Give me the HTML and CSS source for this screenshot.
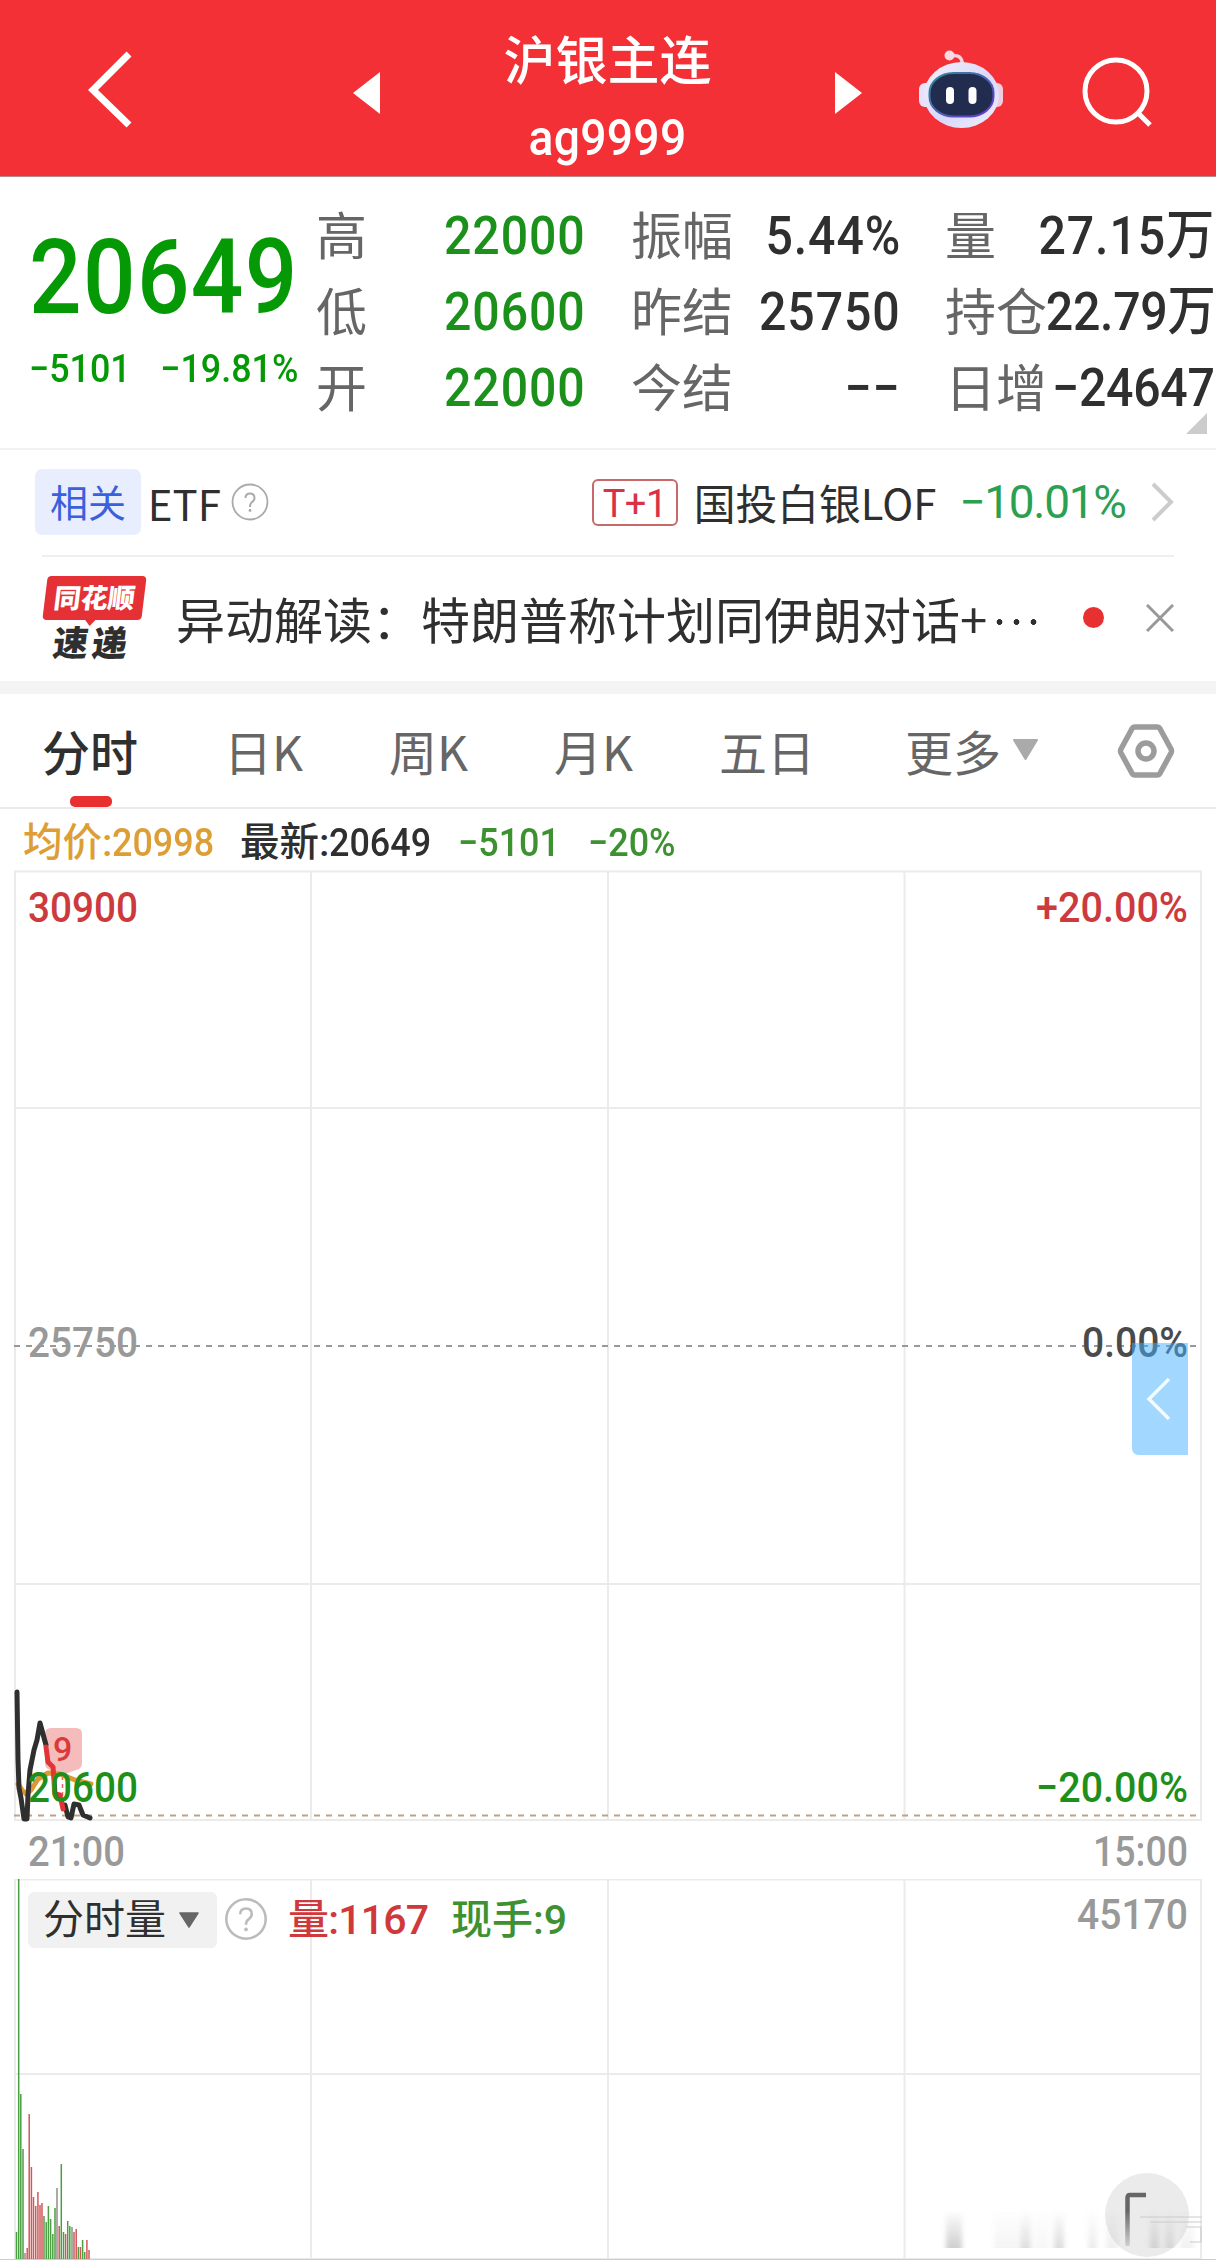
FILE: index.html
```
<!DOCTYPE html>
<html lang="zh-CN">
<head>
    <meta charset="UTF-8">
    <title>沪银主连 ag9999</title>
    <link rel="stylesheet" href="styles.css">
</head>
<body>
    <div class="header">
        <svg class="back" width="50" height="80" viewBox="0 0 50 80"><path d="M45 6 L9 42 L45 77" fill="none" stroke="#fff" stroke-width="7"/></svg>
        <svg class="prev" width="27" height="42" viewBox="0 0 27 42"><path d="M27 0 V42 L0 21 Z" fill="#fff"/></svg>
        <div class="title">
            <div class="name">沪银主连</div>
            <div class="code">ag9999</div>
        </div>
        <svg class="next" width="27" height="42" viewBox="0 0 27 42"><path d="M0 0 V42 L27 21 Z" fill="#fff"/></svg>
        <svg class="robot" width="86" height="80" viewBox="918 49 86 80">
            <defs>
                <linearGradient id="head" x1="0" y1="0" x2="1" y2="1">
                    <stop offset="0" stop-color="#f6f0fb"/>
                    <stop offset=".55" stop-color="#d9d8fa"/>
                    <stop offset="1" stop-color="#eef0fd"/>
                </linearGradient>
                <linearGradient id="rim" x1="0" y1="0" x2="1" y2="1">
                    <stop offset="0" stop-color="#2b8c96"/>
                    <stop offset="1" stop-color="#6a35d0"/>
                </linearGradient>
            </defs>
            <path d="M950 56 Q962 53 962.500 65" fill="none" stroke="#fbd0da" stroke-width="3.500"/>
            <circle cx="949.500" cy="55.500" r="5" fill="#fbd9e2"/>
            <rect x="919" y="83" width="14" height="24" rx="6" fill="#e6e2fa"/>
            <rect x="989" y="83" width="14" height="24" rx="6" fill="#f0ccdf"/>
            <ellipse cx="961.500" cy="95" rx="37.500" ry="33" fill="url(#head)"/>
            <rect x="929.500" y="73" width="64" height="43.500" rx="24" ry="20" fill="#222c4f" stroke="url(#rim)" stroke-width="2"/>
            <rect x="946" y="87" width="8" height="17" rx="4" fill="#fff"/>
            <rect x="968.500" y="87" width="8" height="17" rx="4" fill="#fff"/>
        </svg>
        <svg class="search" width="72" height="72" viewBox="0 0 72 72"><g fill="none" stroke="#fff" stroke-width="5"><circle cx="34" cy="35" r="31"/><path d="M56 57 L68 69"/></g></svg>
    </div>

    <div class="quote">
        <div class="price">
            <div class="last">20649</div>
            <div class="change"><span>−5101</span><span>−19.81%</span></div>
        </div>
        <div class="stats col-a">
            <div class="row"><label>高</label><b class="green">22000</b></div>
            <div class="row"><label>低</label><b class="green">20600</b></div>
            <div class="row"><label>开</label><b class="green">22000</b></div>
        </div>
        <div class="stats col-b">
            <div class="row"><label>振幅</label><b>5.44%</b></div>
            <div class="row"><label>昨结</label><b>25750</b></div>
            <div class="row"><label>今结</label><b>−−</b></div>
        </div>
        <div class="stats col-c">
            <div class="row"><label>量</label><b>27.15万</b></div>
            <div class="row"><label>持仓</label><b class="tight">22.79万</b></div>
            <div class="row"><label>日增</label><b class="tight">−24647</b></div>
        </div>
        <div class="expand"></div>
    </div>

    <div class="related">
        <span class="tag">相关</span>
        <span class="etf">ETF</span>
        <svg class="help" width="38" height="38" viewBox="0 0 38 38"><circle cx="19" cy="19" r="17.500" fill="none" stroke="#aaa" stroke-width="1.800"/><path d="M14.500 15 Q14.500 10.500 19 10.500 Q23.500 10.500 23.500 15 Q23.500 17.500 20.500 19.500 Q19 20.800 19 24" fill="none" stroke="#aaa" stroke-width="2"/><circle cx="19" cy="27.500" r="1.400" fill="#aaa"/></svg>
        <span class="t1">T+1</span>
        <span class="fund">国投白银LOF</span>
        <span class="fund-change">−10.01%</span>
        <svg class="arrow" width="24" height="40" viewBox="0 0 24 40"><path d="M3 2 L21 20 L3 38" fill="none" stroke="#ccc" stroke-width="4"/></svg>
    </div>

    <div class="news">
        <div class="logo">
            <div class="logo-top">同花顺</div>
            <div class="logo-bottom">速递</div>
        </div>
        <div class="news-title">异动解读：特朗普称计划同伊朗对话+<i class="dots"></i></div>
        <span class="dot"></span>
        <svg class="close" width="28" height="28" viewBox="0 0 28 28"><path d="M1 1 L27 27 M27 1 L1 27" stroke="#999" stroke-width="3"/></svg>
    </div>

    <div class="tabs">
        <div class="tab active">分时</div>
        <div class="tab">日K</div>
        <div class="tab">周K</div>
        <div class="tab">月K</div>
        <div class="tab">五日</div>
        <div class="tab more">更多<svg class="caret" width="27" height="22" viewBox="0 0 27 22"><path d="M2 1 H25 L13.500 20 Z" fill="#aaa" stroke="#aaa" stroke-width="2" stroke-linejoin="round"/></svg></div>
        <svg class="settings" width="58" height="56" viewBox="0 0 58 56"><g fill="none" stroke="#9c9c9c" stroke-width="5.500" stroke-linejoin="round"><path d="M17.500 4 Q16 4 15 5.700 L4 26 Q3 28 4 30 L15 50.300 Q16 52 17.500 52 H40.500 Q42 52 43 50.300 L54 30 Q55 28 54 26 L43 5.700 Q42 4 40.500 4 Z"/><circle cx="29" cy="28" r="8"/></g></svg>
    </div>

    <div class="info">
        <span class="avg">均价:<b>20998</b></span>
        <span class="now">最新:<b>20649</b></span>
        <span class="diff"><b>−5101</b></span>
        <span class="diff"><b>−20%</b></span>
    </div>

    <div class="chart">
        <!-- price -->
        <svg width="1216" height="1009" viewBox="0 870 1216 1009">
            <g class="grid">
                <path d="M15 871.500 H1201 V1820 H15 Z M311 872 V1820 M608 872 V1820 M904.500 872 V1820 M15 1108 H1201 M15 1584 H1201"/>
            </g>
            <path d="M14 1346 H1197" stroke="#999" stroke-width="2" stroke-dasharray="6 6"/>
            <path d="M14 1815.500 H1197" stroke="#b9a68a" stroke-width="2" stroke-dasharray="6 6"/>
            <path d="M45 1734 Q45 1728 51 1728 H76 Q82 1728 82 1734 V1763 Q82 1769 76 1770 L62 1775 L51 1770 Q45 1769 45 1763 Z" fill="#f5bcbc"/>
            <path d="M62.500 1776 V1806" stroke="#d66" stroke-width="1.500" stroke-dasharray="4 4"/>
            <polyline points="18,1784 22,1790 26,1794 31,1790 38,1779 48,1773 60,1774 75,1780 91,1784" class="line" stroke="#dd9a34" stroke-width="3.500"/>
            <polyline points="17,1692 18,1760 19,1788 21,1798 24,1819 27,1819 28,1795 30,1770 34,1750 37,1740 40,1723 46,1745" class="line" stroke="#2f2f2f"/>
            <polyline points="65,1805 68,1817 71,1818 74,1804 79,1805 83,1815 90,1818" class="line" stroke="#2f2f2f"/>
            <polyline points="46,1747 48,1762 53,1767 55,1794 60,1795 63,1809" class="line" stroke="#e23336"/>
            <g class="axis">
                <text x="53" y="1761" font-size="34" fill="#d93a3a">9</text>
                <text x="28" y="922" textLength="110" lengthAdjust="spacingAndGlyphs" fill="#cc3a3e">30900</text>
                <text x="1036" y="922" textLength="152" lengthAdjust="spacingAndGlyphs" fill="#cc3a3e">+20.00%</text>
                <text x="28" y="1357" textLength="110" lengthAdjust="spacingAndGlyphs" fill="#999">25750</text>
                <text x="1082" y="1357" textLength="106" lengthAdjust="spacingAndGlyphs" fill="#4a4a4a">0.00%</text>
                <text x="28" y="1802" textLength="110" lengthAdjust="spacingAndGlyphs" fill="#1f8f1b">20600</text>
                <text x="1036" y="1802" textLength="152" lengthAdjust="spacingAndGlyphs" fill="#1f8f1b">−20.00%</text>
                <text x="28" y="1866" textLength="97" lengthAdjust="spacingAndGlyphs" fill="#999">21:00</text>
                <text x="1093" y="1866" textLength="95" lengthAdjust="spacingAndGlyphs" fill="#999">15:00</text>
            </g>
            <path d="M1132 1343 H1188 V1455 H1139 Q1132 1455 1132 1448 Z" fill="#46b2ff" fill-opacity=".5"/>
            <path d="M1169 1379 L1149 1399 L1169 1419" fill="none" stroke="#f2fbff" stroke-width="3.500"/>
        </svg>

        <!-- volume -->
        <div class="volume">
            <svg width="1216" height="381" viewBox="0 1879 1216 381">
                <g class="grid">
                    <path d="M15 1879.500 H1201 V2259 H15 Z M311 1880 V2259 M608 1880 V2259 M904.500 1880 V2259 M15 2074 H1201"/>
                </g>
                <path d="M0 2259.500 H1216" stroke="#ccc"/>
                <g stroke-width="1.500">
                    <path stroke="#4a9f43" d="M16.500 2232V2259 M18.700 1879V2259 M20.800 2094V2259 M23 2149V2259 M44 2216V2259 M46.200 2222V2259 M48.400 2206V2259 M50.600 2219V2259 M52.800 2234V2259 M55 2208V2259 M61.300 2164V2259 M63.500 2232V2259 M67.700 2221V2259 M69.800 2226V2259 M78.300 2247V2259 M82.600 2240V2259 M84.700 2252V2259"/>
                    <path stroke="#d0585a" d="M27.200 2248V2259 M29.200 2114V2259 M31.400 2167V2259 M33.500 2197V2259 M35.700 2206V2259 M37.900 2192V2259 M40 2205V2259 M42 2203V2259 M59.200 2226V2259 M65.600 2234V2259 M74 2232V2259 M76.200 2229V2259 M80.400 2247V2259 M86.900 2240V2259 M89 2250V2259"/>
                    <path stroke="#8f8f8a" d="M25 2253V2259 M57 2188V2259 M72 2227V2259"/>
                </g>
                <g class="axis">
                    <text x="1077" y="1929" textLength="111" lengthAdjust="spacingAndGlyphs" fill="#999">45170</text>
                </g>
                <defs>
                    <linearGradient id="fade" x1="0" y1="0" x2="0" y2="1">
                        <stop offset="0" stop-color="#888" stop-opacity="0"/>
                        <stop offset="1" stop-color="#888" stop-opacity=".45"/>
                    </linearGradient>
                    <linearGradient id="corner" gradientUnits="userSpaceOnUse" x1="0" y1="2195" x2="0" y2="2246">
                        <stop offset=".3" stop-color="#666"/>
                        <stop offset="1" stop-color="#666" stop-opacity=".2"/>
                    </linearGradient>
                    <filter id="soft"><feGaussianBlur stdDeviation="2.500 0.500"/></filter>
                </defs>
                <circle cx="1147" cy="2215" r="42" fill="#ebebeb"/>
                <path d="M1146 2195 H1130 Q1127.500 2195 1127.500 2198 V2246" fill="none" stroke="url(#corner)" stroke-width="4.500"/>
                <g filter="url(#soft)" fill="url(#fade)">
                    <rect x="946" y="2210" width="16" height="38" opacity=".9"/>
                    <rect x="994" y="2210" width="24" height="38" opacity=".2"/>
                    <rect x="1020" y="2210" width="11" height="38" opacity=".6"/>
                    <rect x="1034" y="2210" width="16" height="38" opacity=".15"/>
                    <rect x="1054" y="2210" width="10" height="38" opacity=".65"/>
                    <rect x="1088" y="2210" width="9" height="38" opacity=".35"/>
                    <rect x="1106" y="2210" width="12" height="38" opacity=".3"/>
                    <rect x="1150" y="2210" width="9" height="38" opacity=".6"/>
                    <rect x="1165" y="2210" width="9" height="38" opacity=".5"/>
                    <rect x="1180" y="2210" width="14" height="38" opacity=".25"/>
                </g>
                <path d="M1140 2217 H1202 M1150 2222 H1202 M1186 2227 H1201 V2242 H1190" fill="none" stroke="#ccc" stroke-width="1.200"/>
            </svg>
            <div class="volume-bar">
                <span class="select">分时量<svg width="22" height="17" viewBox="0 0 22 17"><path d="M2 1 H20 L11 15 Z" fill="#666" stroke="#666" stroke-width="1.500" stroke-linejoin="round"/></svg></span>
                <svg class="vol-help" width="44" height="44" viewBox="0 0 38 38"><circle cx="19" cy="19" r="17" fill="none" stroke="#bbb" stroke-width="2.200"/><path d="M14 15 Q14 10 19 10 Q24 10 24 15 Q24 17.500 21 19.500 Q19 20.800 19 24" fill="none" stroke="#bbb" stroke-width="2.200"/><circle cx="19" cy="28" r="1.600" fill="#bbb"/></svg>
                <span class="vol">量:1167</span>
                <span class="hand">现手:9</span>
            </div>
        </div>
    </div>
</body>
</html>
```

FILE: styles.css
```
* {
    box-sizing: border-box;
}

body {
    margin: 0;
    width: 1216px;
    height: 2260px;
    overflow: hidden;
    background: #fff;
    color: #2f2f2f;
    font-family: Roboto, "Noto Sans CJK SC", sans-serif;
}

svg {
    display: block;
    flex-shrink: 0;
}

/* Header */
.header {
    display: flex;
    align-items: flex-start;
    height: 177px;
    background: #f23035;
    border-bottom: 1px solid #b98a8a;
    color: #fff;
}

.back {
    margin: 48px 0 0 84px;
}

.prev {
    margin: 72px 0 0 219px;
}

.title {
    width: 455px;
    text-align: center;
    font-weight: 500;
}

.name {
    margin-top: 25px;
    font-size: 52px;
    line-height: 76px;
}

.code {
    font-size: 50px;
    line-height: 74px;
    letter-spacing: .3px;
    transform: scaleX(.925);
}

.next {
    margin-top: 72px;
}

.robot {
    margin: 49px 0 0 56px;
}

.search {
    margin: 56px 0 0 78px;
}

/* Quote */
.quote {
    position: relative;
    display: flex;
    height: 273px;
    padding-top: 21px;
    border-bottom: 2px solid #f2f2f2;
}

.green {
    color: #1b911b;
}

.price {
    width: 316px;
    padding-left: 29px;
    color: #059a05;
    font-weight: 500;
}

.last {
    width: 310px;
    margin-top: 20px;
    font-size: 104px;
    line-height: 120px;
    letter-spacing: 1.5px;
    transform: scaleX(.89);
    transform-origin: left;
}

.change {
    display: flex;
    gap: 32px;
    width: 310px;
    margin-top: 5px;
    font-size: 39px;
    line-height: 52px;
    white-space: nowrap;
    transform: scaleX(.92);
    transform-origin: left;
}

.row {
    display: flex;
    justify-content: space-between;
    height: 76px;
    line-height: 76px;
    white-space: nowrap;
}

.row label {
    font-family: "Noto Sans CJK SC", sans-serif;
    font-size: 51px;
    line-height: 70px;
    color: #666;
}

.row b {
    margin-left: -40px;
    font-size: 53px;
    font-weight: 500;
    letter-spacing: 1px;
    transform: scaleX(.91);
    transform-origin: right;
}

.row .tight {
    letter-spacing: -.3px;
}

.col-a {
    width: 270px;
}

.col-b {
    width: 270px;
    margin-left: 45px;
}

.col-c {
    width: 270px;
    margin-left: 44px;
}

.expand {
    position: absolute;
    right: 9px;
    bottom: 14px;
    border-left: 21px solid transparent;
    border-bottom: 21px solid #ccc;
}

/* Related fund */
.related {
    display: flex;
    align-items: center;
    height: 107px;
    margin: 0 42px;
    padding-bottom: 1px;
    border-bottom: 2px solid #efefef;
    font-family: "Noto Sans CJK SC", sans-serif;
    font-size: 41.800px;
    white-space: nowrap;
}

.tag {
    width: 106px;
    height: 66px;
    margin-left: -7px;
    border-radius: 7px;
    background: #e9eefe;
    color: #3a60dc;
    font-size: 38px;
    line-height: 64px;
    text-align: center;
}

.etf {
    width: 83px;
    padding-left: 7px;
    font-size: 42px;
}

.help {
    margin-left: 7px;
}

.t1 {
    width: 86px;
    height: 47px;
    margin-left: 323px;
    border: 2px solid #c86a6a;
    border-radius: 6px;
    color: #d93245;
    font-family: Roboto, sans-serif;
    font-size: 38px;
    line-height: 46px;
    text-align: center;
    letter-spacing: -.5px;
}

.fund {
    width: 282px;
    padding-left: 16px;
}

.fund-change {
    width: 191px;
    color: #2ba050;
    font-family: Roboto, sans-serif;
    font-size: 46px;
    letter-spacing: -1.300px;
}

/* News */
.news {
    display: flex;
    align-items: center;
    height: 124px;
    padding-left: 43px;
    padding-bottom: 3px;
}

.logo {
    width: 103px;
    height: 90px;
    margin-top: 6px;
    font-family: "Noto Sans CJK SC", sans-serif;
    font-weight: 900;
    text-align: center;
}

.logo-top {
    position: relative;
    width: 99px;
    height: 44px;
    margin-left: 2px;
    border-radius: 4px;
    background: #e53035;
    color: #fff;
    font-size: 27px;
    line-height: 42px;
    transform: skewX(-7deg);
}

.logo-top::after {
    content: "";
    position: absolute;
    left: 42px;
    top: 43px;
    border: 6px solid transparent;
    border-top: 7px solid #e53035;
}

.logo-bottom {
    margin-left: -4px;
    font-size: 35px;
    line-height: 42px;
    letter-spacing: 4px;
    transform: skewX(-7deg);
}

.news-title {
    width: 893px;
    margin-left: 30px;
    font-family: "Noto Sans CJK SC", sans-serif;
    font-size: 49px;
    line-height: 72px;
    white-space: nowrap;
}

.dots {
    display: inline-block;
    width: 51px;
    height: 6px;
    margin-left: 4px;
    vertical-align: 14px;
    background: radial-gradient(circle, #2f2f2f 2.600px, transparent 3.200px) 0 0 / 17px 6px;
}

.dot {
    width: 21px;
    height: 21px;
    margin-left: 14px;
    border-radius: 50%;
    background: #e93030;
}

.close {
    margin-left: 42px;
}

/* Tabs */
.tabs {
    display: flex;
    height: 128px;
    border-top: 13px solid #f4f4f4;
    border-bottom: 2px solid #eaeaea;
    font-family: "Noto Sans CJK SC", sans-serif;
    font-size: 48px;
    color: #666;
    padding-left: 42px;
    white-space: nowrap;
}

.tab {
    display: flex;
    margin-right: 86px;
    height: 113px;
    line-height: 113px;
}

.active {
    position: relative;
    color: #2f2f2f;
    font-weight: 500;
}

.active::after {
    content: "";
    position: absolute;
    left: 28px;
    bottom: 0;
    width: 42px;
    height: 11px;
    border-radius: 5px;
    background: #e93030;
}

.more {
    margin-left: 4px;
}

.caret {
    margin: 45px 0 0 11px;
}

.settings {
    margin: 29px 0 0 -8px;
}

/* Info */
.info {
    display: flex;
    height: 61px;
    padding-left: 23px;
    font-size: 39.500px;
    line-height: 68px;
    white-space: nowrap;
}

.info span {
    font-weight: 500;
}

.info b {
    display: inline-block;
    font-weight: 500;
    transform: scaleX(.91);
    transform-origin: left;
}

.avg {
    width: 217px;
    color: #dd9e36;
}

.now {
    width: 218px;
}

.info .diff {
    width: 130px;
    color: #3d9131;
}

/* Charts */
.grid {
    fill: none;
    stroke: #ebebeb;
    stroke-width: 2;
}

.line {
    fill: none;
    stroke-width: 5;
    stroke-linecap: round;
    stroke-linejoin: round;
}

.axis {
    font-family: Roboto, sans-serif;
    font-size: 42px;
    font-weight: 500;
}

.volume {
    position: relative;
}

.volume-bar {
    position: absolute;
    left: 28px;
    top: 13px;
    display: flex;
    align-items: flex-start;
    font-size: 41px;
    font-weight: 500;
    line-height: 56px;
    white-space: nowrap;
}

.select {
    display: flex;
    align-items: center;
    gap: 12px;
    width: 189px;
    height: 56px;
    padding-left: 15px;
    border-radius: 6px;
    background: #f1f1f1;
    font-weight: 400;
}

.vol-help {
    margin: 5px 0 0 7px;
}

.vol {
    width: 163px;
    margin-left: 20px;
    color: #d0393b;
    letter-spacing: -.800px;
}

.hand {
    color: #3d9131;
}
```
